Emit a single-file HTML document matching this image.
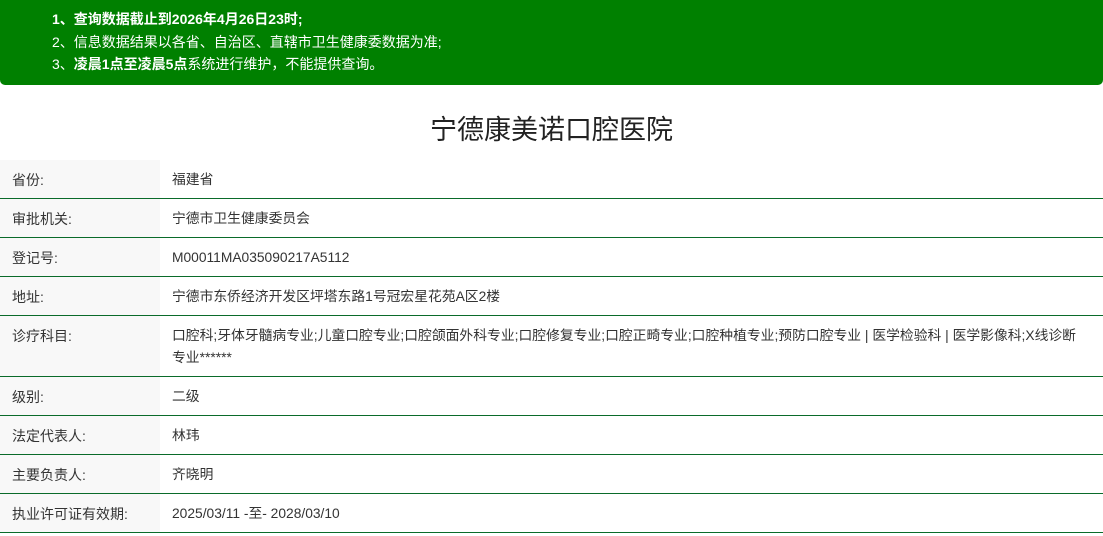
<!DOCTYPE html>
<html><head><meta charset="utf-8"><style>
body{margin:0;width:1103px;height:536px;overflow:hidden;background:#fff;font-family:"Liberation Sans","Noto Sans CJK SC",sans-serif;color:#333;font-size:14px}
.top{position:absolute;left:0;top:0;width:1103px;height:85px;background:#008000;border-radius:0 0 5px 5px;color:#fff}
.top div{position:absolute;left:52px;font-size:14px;line-height:22px}
h1{position:absolute;top:110px;left:0;width:1103px;text-align:center;margin:0;font-size:27px;font-weight:normal;color:#222;line-height:40px}
table{position:absolute;top:160px;left:0;width:1103px;border-collapse:collapse}
td{border-bottom:1px solid #0a6b2a;padding:0;vertical-align:top;font-size:14px;line-height:22px;white-space:nowrap}
td.l{width:160px;background:#f8f8f8;padding-left:12px;box-sizing:border-box}
td.v{padding-left:12px;font-size:13.8px}
td{padding-top:9px;padding-bottom:7px}
</style></head><body>
<div class="top">
<div style="top:8px"><b>1、查询数据截止到2026年4月26日23时;</b></div>
<div style="top:31px">2、信息数据结果以各省、自治区、直辖市卫生健康委数据为准;</div>
<div style="top:53px">3、<b>凌晨1点至凌晨5点</b>系统进行维护，不能提供查询。</div>
</div>
<h1>宁德康美诺口腔医院</h1>
<table>
<tr><td class="l">省份:</td><td class="v">福建省</td></tr>
<tr><td class="l">审批机关:</td><td class="v">宁德市卫生健康委员会</td></tr>
<tr><td class="l">登记号:</td><td class="v">M00011MA035090217A5112</td></tr>
<tr><td class="l">地址:</td><td class="v">宁德市东侨经济开发区坪塔东路1号冠宏星花苑A区2楼</td></tr>
<tr><td class="l">诊疗科目:</td><td class="v">口腔科;牙体牙髓病专业;儿童口腔专业;口腔颌面外科专业;口腔修复专业;口腔正畸专业;口腔种植专业;预防口腔专业 | 医学检验科 | 医学影像科;X线诊断<br>专业******</td></tr>
<tr><td class="l">级别:</td><td class="v">二级</td></tr>
<tr><td class="l">法定代表人:</td><td class="v">林玮</td></tr>
<tr><td class="l">主要负责人:</td><td class="v">齐晓明</td></tr>
<tr><td class="l">执业许可证有效期:</td><td class="v">2025/03/11 -至- 2028/03/10</td></tr>
</table>
</body></html>
